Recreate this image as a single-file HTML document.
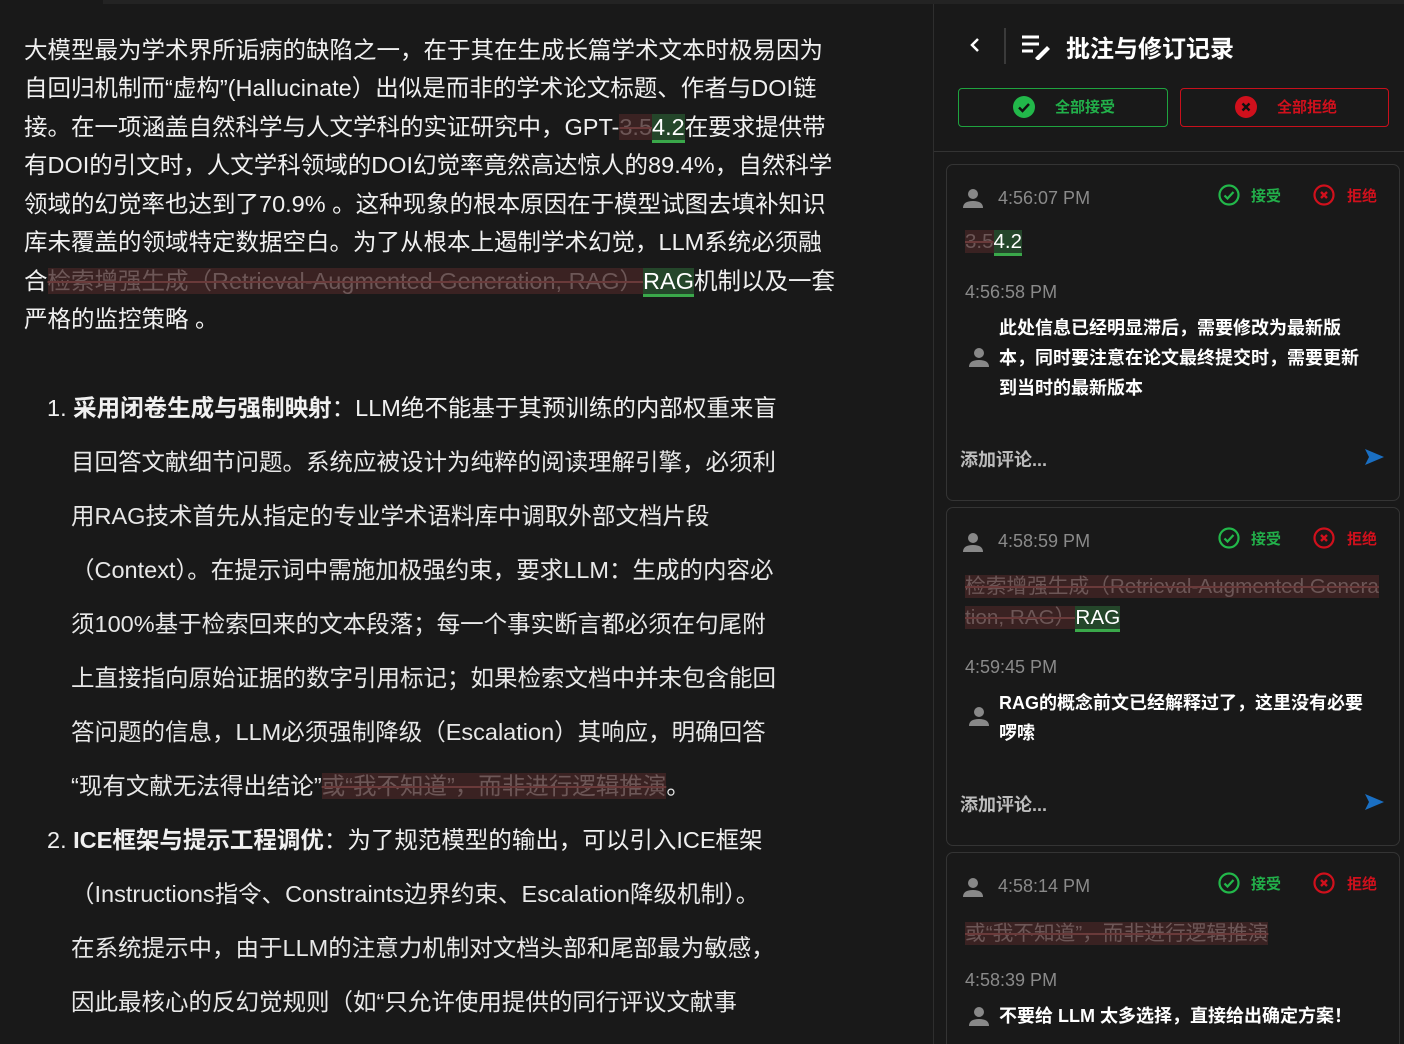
<!DOCTYPE html>
<html style="overflow:hidden"><head><meta charset="utf-8"><style>
*{margin:0;padding:0;box-sizing:border-box}
html,body{width:1404px;height:1044px;overflow:hidden}
body{background:#191919;position:relative;font-family:"Liberation Sans","Noto Sans CJK SC",sans-serif;color:#f0f0f0}
.a{position:absolute;white-space:nowrap}
.l{font-size:23.5px;left:24px;line-height:30px}
.li{font-size:23.5px;left:71px;line-height:30px;color:#e8e8e8}
.del{background:#3a2222;color:#6d5757;text-decoration:line-through;text-decoration-color:#6a3a3a}
.ins{background:#24462a;border-bottom:3px solid #3aa84a;color:#fff}
.card{position:absolute;left:946px;width:454px;border:1px solid #343434;border-radius:7px}
.ts{font-size:18px;color:#8a8a8a}
.acc{color:#22b04a;font-size:15px;font-weight:bold}
.rej{color:#d0101c;font-size:15px;font-weight:bold}
.cm{font-size:18px;font-weight:bold;color:#fff;line-height:30px}
.add{font-size:18px;font-weight:bold;color:#bbb}
</style></head><body>
<div class="a" style="left:103px;top:0;width:1301px;height:4px;background:#232323"></div>
<div class="a" style="left:933px;top:4px;width:1px;height:1040px;background:#2e2e2e"></div>

<div class="a l" style="top:35px">大模型最为学术界所诟病的缺陷之一，在于其在生成长篇学术文本时极易因为</div>
<div class="a l" style="top:73px">自回归机制而“虚构”(Hallucinate）出似是而非的学术论文标题、作者与DOI链</div>
<div class="a l" style="top:112px">接。在一项涵盖自然科学与人文学科的实证研究中，GPT-<span class="del">3.5</span><span class="ins">4.2</span>在要求提供带</div>
<div class="a l" style="top:150px">有DOI的引文时，人文学科领域的DOI幻觉率竟然高达惊人的89.4%，自然科学</div>
<div class="a l" style="top:189px">领域的幻觉率也达到了70.9% 。这种现象的根本原因在于模型试图去填补知识</div>
<div class="a l" style="top:227px">库未覆盖的领域特定数据空白。为了从根本上遏制学术幻觉，LLM系统必须融</div>
<div class="a l" style="top:266px">合<span class="del">检索增强生成（Retrieval-Augmented Generation, RAG）</span><span class="ins">RAG</span>机制以及一套</div>
<div class="a l" style="top:304px">严格的监控策略 。</div>

<div class="a l" style="top:393px;left:47px">1. <b>采用闭卷生成与强制映射</b>：LLM绝不能基于其预训练的内部权重来盲</div>
<div class="a li" style="top:447px">目回答文献细节问题。系统应被设计为纯粹的阅读理解引擎，必须利</div>
<div class="a li" style="top:501px">用RAG技术首先从指定的专业学术语料库中调取外部文档片段</div>
<div class="a li" style="top:555px">（Context）。在提示词中需施加极强约束，要求LLM：生成的内容必</div>
<div class="a li" style="top:609px">须100%基于检索回来的文本段落；每一个事实断言都必须在句尾附</div>
<div class="a li" style="top:663px">上直接指向原始证据的数字引用标记；如果检索文档中并未包含能回</div>
<div class="a li" style="top:717px">答问题的信息，LLM必须强制降级（Escalation）其响应，明确回答</div>
<div class="a li" style="top:771px">“现有文献无法得出结论”<span class="del">或“我不知道”，而非进行逻辑推演</span>。</div>
<div class="a l" style="top:825px;left:47px">2. <b>ICE框架与提示工程调优</b>：为了规范模型的输出，可以引入ICE框架</div>
<div class="a li" style="top:879px">（Instructions指令、Constraints边界约束、Escalation降级机制）。</div>
<div class="a li" style="top:933px">在系统提示中，由于LLM的注意力机制对文档头部和尾部最为敏感，</div>
<div class="a li" style="top:987px">因此最核心的反幻觉规则（如“只允许使用提供的同行评议文献事</div>

<svg class="a" style="left:968px;top:36px" width="14" height="18" viewBox="0 0 14 18"><path d="M10 3 L4 9 L10 15" stroke="#fff" stroke-width="2.5" fill="none"/></svg>
<div class="a" style="left:1004px;top:28px;width:2px;height:36px;background:#3a3a3a"></div>
<svg class="a" style="left:1021px;top:34px" width="30" height="26" viewBox="0 0 30 26"><g stroke="#fff" stroke-width="3"><path d="M1 3H18M1 10H18M1 17H12"/></g><path d="M14 24 L26 12 L29 15 L17 27Z" fill="#fff"/></svg>
<div class="a" style="left:1066px;top:29px;font-size:24px;font-weight:bold;color:#fff">批注与修订记录</div>

<div class="a" style="left:958px;top:88px;width:210px;height:39px;border:1.5px solid #1fa33f;border-radius:4px"></div>
<svg class="a" style="left:1013px;top:96px" width="22" height="22" viewBox="0 0 22 22"><circle cx="11" cy="11" r="11" fill="#22b84a"/><path d="M6 11.5l3.5 3.5 6.5-7" stroke="#111" stroke-width="2.4" fill="none"/></svg>
<div class="a acc" style="left:1055px;top:96px">全部接受</div>
<div class="a" style="left:1180px;top:88px;width:209px;height:39px;border:1.5px solid #c8101c;border-radius:4px"></div>
<svg class="a" style="left:1235px;top:96px" width="22" height="22" viewBox="0 0 22 22"><circle cx="11" cy="11" r="11" fill="#d0101c"/><path d="M7.5 7.5l7 7M14.5 7.5l-7 7" stroke="#111" stroke-width="2.4"/></svg>
<div class="a rej" style="left:1277px;top:96px">全部拒绝</div>
<div class="a" style="left:934px;top:151px;width:470px;height:1px;background:#333"></div>

<div class="card" style="top:164px;height:337px"></div>
<div class="card" style="top:507px;height:339px"></div>
<div class="card" style="top:852px;height:220px"></div>

<svg width="0" height="0" style="position:absolute"><defs>
<g id="u"><circle cx="10" cy="6" r="5" fill="#888"/><path d="M0 20 Q0 13 10 13 Q20 13 20 20Z" fill="#888"/></g>
<g id="ok"><circle cx="11" cy="11" r="9.5" stroke="#22b84a" stroke-width="2.2" fill="none"/><path d="M6.5 11.5l3 3 6-6.5" stroke="#22b84a" stroke-width="2.2" fill="none"/></g>
<g id="no"><circle cx="11" cy="11" r="9.5" stroke="#d0101c" stroke-width="2.2" fill="none"/><path d="M8 8l6 6M14 8l-6 6" stroke="#d0101c" stroke-width="2.4"/></g>
<g id="snd"><path d="M0 0 L19 8 L0 16 L4 8Z" fill="#1a6fc2"/></g>
</defs></svg>

<svg class="a" style="left:963px;top:188px" width="20" height="20"><use href="#u"/></svg>
<div class="a ts" style="left:998px;top:188px">4:56:07 PM</div>
<svg class="a" style="left:1218px;top:184px" width="22" height="22"><use href="#ok"/></svg>
<div class="a acc" style="left:1251px;top:185px">接受</div>
<svg class="a" style="left:1313px;top:184px" width="22" height="22"><use href="#no"/></svg>
<div class="a rej" style="left:1347px;top:185px">拒绝</div>
<div class="a" style="left:965px;top:230px;font-size:20.5px"><span class="del">3.5</span><span class="ins">4.2</span></div>
<div class="a ts" style="left:965px;top:282px">4:56:58 PM</div>
<svg class="a" style="left:969px;top:347px" width="20" height="20"><use href="#u"/></svg>
<div class="a cm" style="left:999px;top:313px">此处信息已经明显滞后，需要修改为最新版<br>本，同时要注意在论文最终提交时，需要更新<br>到当时的最新版本</div>
<div class="a add" style="left:960px;top:446px">添加评论...</div>
<svg class="a" style="left:1365px;top:449px" width="20" height="16"><use href="#snd"/></svg>

<svg class="a" style="left:963px;top:532px" width="20" height="20"><use href="#u"/></svg>
<div class="a ts" style="left:998px;top:531px">4:58:59 PM</div>
<svg class="a" style="left:1218px;top:527px" width="22" height="22"><use href="#ok"/></svg>
<div class="a acc" style="left:1251px;top:528px">接受</div>
<svg class="a" style="left:1313px;top:527px" width="22" height="22"><use href="#no"/></svg>
<div class="a rej" style="left:1347px;top:528px">拒绝</div>
<div class="a" style="left:965px;top:571px;font-size:20.7px;line-height:31px"><span class="del">检索增强生成（Retrieval-Augmented Genera</span><br><span class="del">tion, RAG）</span><span class="ins">RAG</span></div>
<div class="a ts" style="left:965px;top:657px">4:59:45 PM</div>
<svg class="a" style="left:969px;top:706px" width="20" height="20"><use href="#u"/></svg>
<div class="a cm" style="left:999px;top:688px">RAG的概念前文已经解释过了，这里没有必要<br>啰嗦</div>
<div class="a add" style="left:960px;top:791px">添加评论...</div>
<svg class="a" style="left:1365px;top:794px" width="20" height="16"><use href="#snd"/></svg>

<svg class="a" style="left:963px;top:877px" width="20" height="20"><use href="#u"/></svg>
<div class="a ts" style="left:998px;top:876px">4:58:14 PM</div>
<svg class="a" style="left:1218px;top:872px" width="22" height="22"><use href="#ok"/></svg>
<div class="a acc" style="left:1251px;top:873px">接受</div>
<svg class="a" style="left:1313px;top:872px" width="22" height="22"><use href="#no"/></svg>
<div class="a rej" style="left:1347px;top:873px">拒绝</div>
<div class="a" style="left:965px;top:916px;font-size:20.7px"><span class="del">或“我不知道”，而非进行逻辑推演</span></div>
<div class="a ts" style="left:965px;top:970px">4:58:39 PM</div>
<svg class="a" style="left:969px;top:1006px" width="20" height="20"><use href="#u"/></svg>
<div class="a cm" style="left:999px;top:1001px">不要给 LLM 太多选择，直接给出确定方案！</div>
</body></html>
